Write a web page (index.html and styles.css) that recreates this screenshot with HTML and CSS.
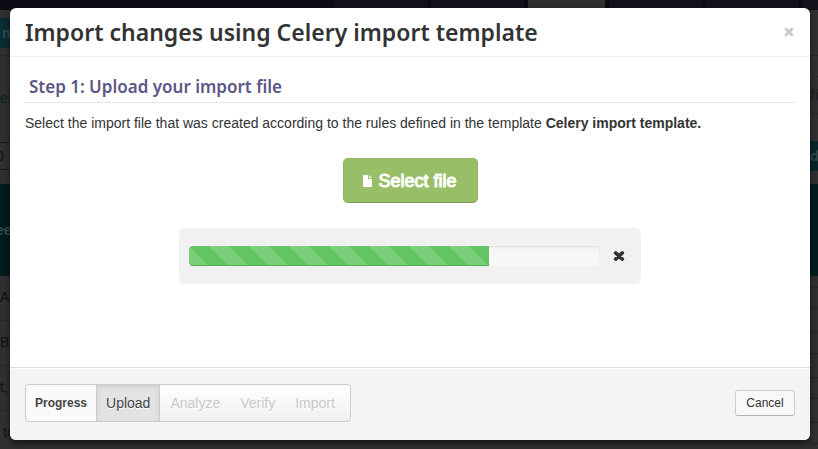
FILE: index.html
```html
<!DOCTYPE html>
<html lang="en">
<head>
<meta charset="utf-8">
<title>Import changes</title>
<link rel="stylesheet" href="styles.css">
</head>
<body>
<div class="page" aria-hidden="true">
  <div class="navbar"><span></span><span></span><span class="active"></span><span></span><span></span><span class="last"></span></div>
  <div class="columns">
    <div class="strip">
      <div class="gap-s"></div>
      <div class="chip chip-left">n</div>
      <div class="line space-7"></div>
      <div class="label">er</div>
      <div class="field">0</div>
      <div class="band">ee</div>
      <div class="item">Au</div>
      <div class="item">Br</div>
      <div class="item">t,</div>
      <div class="item indent">to</div>
    </div>
    <div class="strip strip-right">
      <div class="line space-45"></div>
      <div class="line space-20"></div>
      <div class="tab">fi</div>
      <div class="chip chip-right">d</div>
      <div class="band"></div>
      <div class="box"></div>
      <div class="box"></div>
      <div class="box"></div>
      <div class="box"></div>
    </div>
  </div>
</div>

<div class="backdrop">
  <section class="modal" role="dialog" aria-labelledby="title">
    <header class="modal-header">
      <h1 id="title">Import changes using Celery import template</h1>
      <button class="close" type="button" aria-label="Close">
        <svg width="10" height="10" viewBox="0 0 10 10"><path d="M1.3 1.3l7.4 7.4M8.7 1.3L1.3 8.7" stroke="#c9c9c9" stroke-width="2.7"/></svg>
      </button>
    </header>
    <div class="modal-body">
      <h2>Step 1: Upload your import file</h2>
      <p>Select the import file that was created according to the rules defined in the template <strong>Celery import template.</strong></p>
      <button class="select-file" type="button">
        <svg width="9" height="12" viewBox="0 0 9 12"><path d="M0 0h5v4h4v8H0zM6 0l3 3H6z" fill="#fff"/></svg>
        <span>Select file</span>
      </button>
      <div class="well">
        <div class="progress" role="progressbar" aria-label="Upload" aria-valuenow="73" aria-valuemin="0" aria-valuemax="100">
          <div class="bar" style="width:73%"></div>
        </div>
        <button class="remove" type="button" aria-label="Cancel upload">
          <svg width="12" height="12" viewBox="0 0 12 12"><path d="M2.7 2.9l6.6 6.2M9.3 2.9L2.7 9.1" stroke="#333" stroke-width="3.7" stroke-linecap="round"/></svg>
        </button>
      </div>
    </div>
    <footer class="modal-footer">
      <div class="steps">
        <strong class="steps-label">Progress</strong>
        <button class="current" type="button">Upload</button>
        <button type="button" disabled>Analyze</button>
        <button type="button" disabled>Verify</button>
        <button type="button" disabled>Import</button>
      </div>
      <button class="cancel" type="button">Cancel</button>
    </footer>
  </section>
</div>
</body>
</html>
```
FILE: styles.css
```css
* { box-sizing: border-box; }
body {
  margin: 0;
  height: 100vh;
  overflow: hidden;
  background: #303030;
  color: #333;
  font: 14px/20px "Liberation Sans", Arial, sans-serif;
}
button { font: inherit; padding: 0; border: 0; background: none; color: inherit; }
svg { display: block; }

/* Dimmed page behind the dialog */
.page { color: #111; }
.navbar {
  display: flex;
  gap: 4px;
  height: 10px;
  padding-left: 334px;
  background: #0c0b14;
}
.navbar span { flex: 6; background: #13111b; }
.navbar .active { flex: 5; background: #303030; }
.navbar .last { flex: 1; }
.columns { display: flex; justify-content: space-between; }
.strip { width: 24px; overflow: hidden; white-space: nowrap; }
.gap-s { height: 8px; }
.line { border-bottom: 1px solid #272727; }
.space-7 { height: 8px; }
.space-20 { height: 21px; }
.space-45 { height: 46px; }
.chip { height: 30px; background: #0b2c33; color: #2f4a50; font-weight: bold; line-height: 30px; }
.chip-left { padding-left: 2px; }
.label { height: 86px; line-height: 84px; color: #0c2226; }
.field { height: 28px; margin-bottom: 14px; border: solid #1a1a1a; border-width: 1px 0; line-height: 26px; text-indent: -4px; }
.band { height: 92px; background: #021c1d; color: #3a4a4b; font-weight: bold; line-height: 92px; text-indent: -4px; }
.item { height: 45px; line-height: 43px; border-bottom: 1px dotted #222; }
.indent { text-indent: 3px; }
.strip-right { padding-left: 16px; }
.tab { height: 37px; margin-bottom: 27px; line-height: 36px; color: #222; border-bottom: 1px solid #272727; font-weight: bold; }
.chip-right { margin-bottom: 13px; background: #08242d; }
.box { height: 22px; margin: 11px 0 23px; border: solid #242424; border-width: 1px 0; }
.box + .box { margin-top: 0; }

.backdrop {
  position: absolute;
  inset: 0;
  display: flex;
  padding: 8px 8px 9px 10px;
}
.modal {
  flex: 1;
  display: flex;
  flex-direction: column;
  overflow: hidden;
  border-radius: 6px;
  background: #fff;
  box-shadow: 0 3px 7px rgba(0, 0, 0, .6);
}
.modal-header {
  display: flex;
  align-items: center;
  justify-content: space-between;
  padding: 9px 16px 9px 15px;
  border-bottom: 1px solid #eee;
}
h1, h2 { margin: 0; font-family: "Trebuchet MS", "Noto Sans", sans-serif; font-weight: 600; }
h1 { font-size: 23px; line-height: 30px; }
.modal-body { flex: 1; padding: 15px 15px 0; }
h2 {
  padding: 0 4px;
  border-bottom: 1px solid #e5e5e5;
  color: #5c5787;
  font-size: 17px;
  line-height: 30px;
}
p { margin: 10px 0 25px; }
.select-file {
  display: flex;
  align-items: center;
  justify-content: center;
  gap: 6px;
  width: 135px;
  height: 45px;
  margin: 0 auto 25px;
  border: 1px solid #8db45d;
  border-bottom-color: #7da04f;
  border-radius: 5px;
  background: #98bf68;
  color: #fff;
  font-size: 18px;
  -webkit-text-stroke: 1px #fff;
}
.well {
  display: flex;
  align-items: center;
  justify-content: space-between;
  width: 60%;
  height: 56px;
  margin: 0 auto;
  padding: 0 16px 0 10px;
  border-radius: 6px;
  background: #f1f1f1;
}
.progress {
  flex: 1;
  height: 20px;
  margin-right: 13px;
  overflow: hidden;
  border-radius: 4px;
  background: linear-gradient(#f4f4f4, #f9f9f9);
  box-shadow: inset 0 1px 2px rgba(0, 0, 0, .1);
}
.bar {
  height: 100%;
  background: linear-gradient(45deg, #7bcf7b 25%, #62c462 25%, #62c462 50%, #7bcf7b 50%, #7bcf7b 75%, #62c462 75%);
  background-position: 20px 0;
  background-size: 40px 40px;
  box-shadow: inset 0 -1px 0 #4fae50;
}
.modal-footer {
  display: flex;
  align-items: center;
  justify-content: space-between;
  padding: 16px 15px 18px;
  border-top: 1px solid #ddd;
  background: #f4f4f4;
  box-shadow: inset 0 1px 0 #fff;
}
.steps {
  display: flex;
  height: 38px;
  padding-right: 5px;
  border: 1px solid #ccc;
  border-radius: 4px;
  background: linear-gradient(#fff, #f0f0f0);
}
.steps button { padding: 0 10px; }
.steps button:disabled { color: #c8c8c8; text-shadow: 0 1px 0 #fff; }
.steps-label { padding: 0 9px; border-radius: 4px 0 0 4px; background: #fafafa; color: #444; font-size: 12px; line-height: 36px; }
.steps .current { padding: 0 9px; border: solid #ccc; border-width: 0 1px; background: #e3e3e3; box-shadow: inset 0 2px 4px rgba(0, 0, 0, .1); color: #444; text-shadow: 0 1px 0 #fff; }
.cancel {
  width: 60px;
  height: 26px;
  border: 1px solid #ccc;
  border-bottom-color: #b5b5b5;
  border-radius: 3px;
  background: #f8f8f8;
  font-size: 12px;
}
```
